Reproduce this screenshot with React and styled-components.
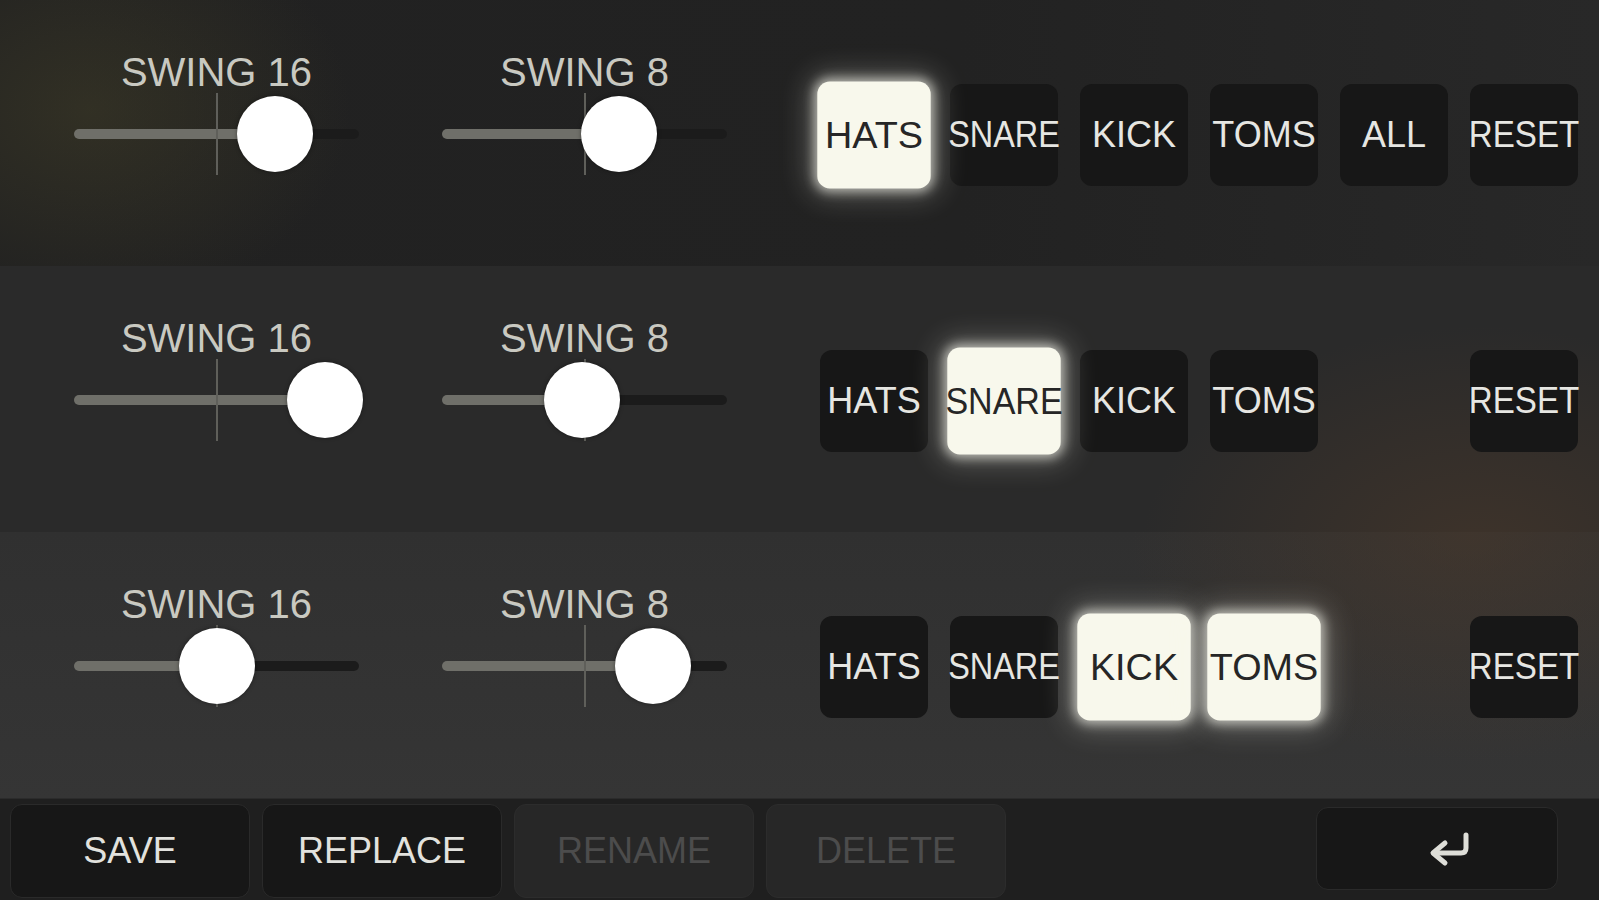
import React from "react";
import styled, { createGlobalStyle, css } from "styled-components";

const GlobalStyle = createGlobalStyle`
  html, body {
    margin: 0;
    padding: 0;
    background: #222;
  }
  * {
    box-sizing: border-box;
  }
`;

const Screen = styled.div`
  width: 1599px;
  height: 900px;
  overflow: hidden;
  display: flex;
  flex-direction: column;
  font-family: "Liberation Sans", Arial, sans-serif;
  background: #222;
`;

const glows = {
  1: css`
    background:
      radial-gradient(ellipse 260px 200px at 90px 110px, rgba(70, 66, 40, 0.45), rgba(70, 66, 40, 0) 100%),
      linear-gradient(to right, #212121 0%, #222 60%, #282828 100%);
  `,
  2: css`
    background:
      radial-gradient(ellipse 340px 230px at 1480px 290px, rgba(82, 60, 42, 0.5), rgba(82, 60, 42, 0) 100%),
      #2a2a2a;
  `,
  3: css`
    background:
      radial-gradient(ellipse 340px 230px at 1470px 0px, rgba(82, 60, 42, 0.45), rgba(82, 60, 42, 0) 100%),
      linear-gradient(to bottom, #303030, #353535);
  `,
};

const Row = styled.div`
  height: 266px;
  flex: none;
  display: flex;
  align-items: flex-start;
  padding: 51px 0 0 74px;
  ${(p) => glows[p.$shade]}
`;

const Sliders = styled.div`
  display: flex;
  gap: 83px;
`;

const Slider = styled.div`
  width: 285px;
  display: flex;
  flex-direction: column;
`;

const Label = styled.div`
  height: 42px;
  line-height: 42px;
  font-size: 40px;
  text-align: center;
  color: #c9c9c1;
  white-space: nowrap;
`;

const TrackArea = styled.div`
  position: relative;
  height: 82px;
`;

const Track = styled.div`
  position: absolute;
  left: 0;
  right: 0;
  top: 36px;
  height: 10px;
  border-radius: 5px;
  background: linear-gradient(
    to right,
    #6f6f69 ${(p) => p.$pct}%,
    #1b1b1b ${(p) => p.$pct}%
  );
`;

const Tick = styled.div`
  position: absolute;
  left: 50%;
  top: 0;
  bottom: 0;
  width: 2px;
  margin-left: -1px;
  background: #5f5f5a;
`;

const Knob = styled.div`
  position: absolute;
  top: 3px;
  width: 76px;
  height: 76px;
  margin-left: -38px;
  border-radius: 50%;
  background: #fff;
  box-shadow: 0 0 4px rgba(0, 0, 0, 0.4);
`;

const Pads = styled.div`
  display: flex;
  gap: 22px;
  margin: 33px 0 0 93px;
`;

const Pad = styled.div`
  width: 108px;
  height: 102px;
  flex: none;
  border-radius: 12px;
  display: flex;
  align-items: center;
  justify-content: center;
  font-size: 36px;
  white-space: nowrap;
  background: #171717;
  color: #e6e6e2;
  visibility: ${(p) => (p.$hidden ? "hidden" : "visible")};
  ${(p) =>
    p.$on &&
    css`
      background: #f8f8ec;
      color: #262626;
      transform: scale(1.05);
      box-shadow: 0 0 10px 3px rgba(255, 255, 245, 0.6),
        0 0 26px 8px rgba(255, 255, 245, 0.25);
    `}
`;

const PadText = styled.span`
  display: inline-block;
  transform: scaleX(${(p) => p.$squeeze || 1});
`;

const BottomBar = styled.div`
  flex: 1;
  display: flex;
  align-items: flex-start;
  gap: 12px;
  padding: 5px 41px 0 10px;
  background: #1f1f1f;
  border-top: 1px solid #2b2b2b;
`;

const BarButton = styled.div`
  width: 240px;
  height: 94px;
  border-radius: 12px;
  border: 1px solid ${(p) => (p.$disabled ? "#2c2c2c" : "#2a2a2a")};
  background: ${(p) => (p.$disabled ? "#272727" : "#171717")};
  color: ${(p) => (p.$disabled ? "#4c4c4c" : "#e2e2de")};
  display: flex;
  align-items: center;
  justify-content: center;
  font-size: 36px;
`;

const EnterButton = styled(BarButton)`
  width: 242px;
  height: 83px;
  margin: 3px 0 0 auto;
  padding: 6px 0 0 26px;
`;

const PAD_NAMES = [
  ["HATS", 1],
  ["SNARE", 0.9],
  ["KICK", 1],
  ["TOMS", 1],
  ["ALL", 1],
  ["RESET", 0.92],
];

const rows = [
  { s16: 70.5, s8: 62, on: ["HATS"], all: true },
  { s16: 88, s8: 49, on: ["SNARE"], all: false },
  { s16: 50, s8: 74, on: ["KICK", "TOMS"], all: false },
];

function SwingSlider({ label, value }) {
  return (
    <Slider>
      <Label>{label}</Label>
      <TrackArea>
        <Track $pct={value} />
        <Tick />
        <Knob style={{ left: `${value}%` }} />
      </TrackArea>
    </Slider>
  );
}

function EnterIcon() {
  return (
    <svg width="50" height="42" viewBox="0 0 50 42" fill="none">
      <path
        d="M41 4 V17 Q41 22 36 22 H9"
        stroke="#deded8"
        strokeWidth="5"
        strokeLinecap="round"
        strokeLinejoin="round"
      />
      <path
        d="M20 12 L8 22 L20 32"
        stroke="#deded8"
        strokeWidth="5"
        strokeLinecap="round"
        strokeLinejoin="round"
      />
    </svg>
  );
}

export default function App() {
  return (
    <>
      <GlobalStyle />
      <Screen>
        {rows.map((row, i) => (
          <Row key={i} $shade={i + 1}>
            <Sliders>
              <SwingSlider label="SWING 16" value={row.s16} />
              <SwingSlider label="SWING 8" value={row.s8} />
            </Sliders>
            <Pads>
              {PAD_NAMES.map(([name, squeeze]) => (
                <Pad
                  key={name}
                  $on={row.on.includes(name)}
                  $hidden={name === "ALL" && !row.all}
                >
                  <PadText $squeeze={squeeze}>{name}</PadText>
                </Pad>
              ))}
            </Pads>
          </Row>
        ))}
        <BottomBar>
          <BarButton>SAVE</BarButton>
          <BarButton>REPLACE</BarButton>
          <BarButton $disabled>RENAME</BarButton>
          <BarButton $disabled>DELETE</BarButton>
          <EnterButton>
            <EnterIcon />
          </EnterButton>
        </BottomBar>
      </Screen>
    </>
  );
}
